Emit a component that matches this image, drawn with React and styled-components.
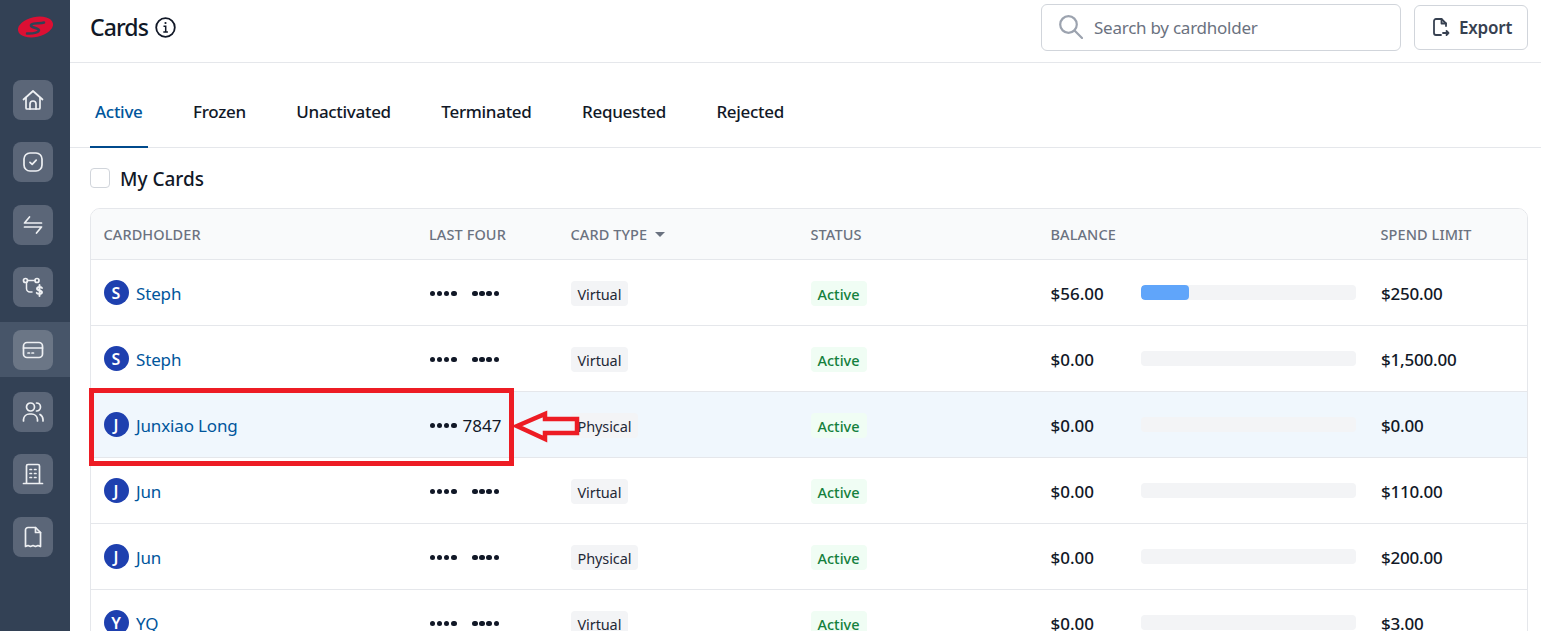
import React from "react";
import styled, { createGlobalStyle } from "styled-components";

const Global = createGlobalStyle`
  html, body { margin: 0; padding: 0; height: 100%; overflow: hidden; background: #fff; }
  body { font-family: "Noto Sans", "Open Sans", sans-serif; color: #111827; }
  * { box-sizing: border-box; }
`;

const Page = styled.div`
  display: flex;
  width: 1541px;
  height: 631px;
  overflow: hidden;
  position: relative;
`;
const Sidebar = styled.nav`
  width: 70px;
  flex: none;
  background: #334155;
  display: flex;
  flex-direction: column;
`;
const LogoSlot = styled.div`
  height: 80px;
  display: flex;
  padding: 16px 0 0 18px;
`;
const NavList = styled.div`
  display: flex;
  flex-direction: column;
`;
const NavItem = styled.div`
  height: 55px;
  margin-bottom: ${(p) => (p.$active ? "15.4px" : "7.4px")};
  display: flex;
  align-items: flex-start;
  padding: ${(p) => (p.$active ? "8px" : "0")} 0 0 13px;
  margin-top: ${(p) => (p.$active ? "-8px" : "0")};
  background: ${(p) => (p.$active ? "#475569" : "transparent")};
`;
const NavButton = styled.div`
  width: 40px;
  height: 40px;
  border-radius: 8px;
  background: ${(p) => (p.$active ? "#6b7686" : "#5b6678")};
  color: #eef0f3;
  display: flex;
  align-items: center;
  justify-content: center;
`;
const Main = styled.main`
  flex: 1;
  min-width: 0;
  display: flex;
  flex-direction: column;
`;
const TopBar = styled.header`
  height: 63px;
  flex: none;
  border-bottom: 1px solid #e5e7eb;
  display: flex;
  align-items: center;
  padding: 0 13px 8px 20px;
`;
const Title = styled.h1`
  margin: 0;
  font-size: 23px;
  font-weight: 500;
  letter-spacing: -0.9px;
  color: #111827;
  display: flex;
  align-items: center;
  gap: 7px;
  flex: 1;
`;
const SearchBox = styled.div`
  width: 360px;
  height: 47px;
  border: 1px solid #d1d5db;
  border-radius: 6px;
  display: flex;
  align-items: center;
  gap: 11px;
  padding: 0 17px;
  color: #6b7280;
  font-size: 17px;
  letter-spacing: -0.25px;
  margin-right: 13px;
`;
const ExportButton = styled.button`
  width: 114px;
  height: 45px;
  border: 1px solid #d1d5db;
  border-radius: 6px;
  background: #fff;
  font: inherit;
  font-size: 17px;
  font-weight: 600;
  letter-spacing: -0.2px;
  color: #374151;
  display: flex;
  align-items: center;
  gap: 9px;
  padding: 0 0 0 17px;
`;
const Tabs = styled.div`
  height: 85px;
  flex: none;
  border-bottom: 1px solid #e5e7eb;
  padding-left: 20px;
  display: flex;
`;
const Tab = styled.div`
  padding: 13px 5px 0;
  margin-right: 40.5px;
  display: flex;
  align-items: center;
  height: 85px;
  font-size: 17px;
  font-weight: 500;
  letter-spacing: -0.3px;
  color: ${(p) => (p.$active ? "#00569c" : "#111827")};
  border-bottom: 2px solid ${(p) => (p.$active ? "#004a8c" : "transparent")};
`;
const Filter = styled.label`
  height: 60px;
  flex: none;
  padding-left: 20px;
  display: flex;
  align-items: center;
  gap: 10px;
  font-size: 19px;
  font-weight: 500;
  color: #111827;
`;
const FilterText = styled.span`
  padding-top: 2px;
`;
const Check = styled.span`
  width: 20px;
  height: 20px;
  border: 1px solid #d1d5db;
  border-radius: 4px;
  background: #fff;
`;
const Table = styled.div`
  margin-left: 20px;
  width: 1438px;
  border: 1px solid #e5e7eb;
  border-radius: 10px 10px 0 0;
  overflow: hidden;
  flex: none;
`;
const Row = styled.div`
  display: grid;
  grid-template-columns: 325.5px 141.5px 240px 240px 330px 1fr;
  padding-left: 12.5px;
  padding-top: ${(p) => (p.$head ? "0" : "2px")};
  align-items: center;
  height: ${(p) => (p.$head ? "51px" : "66px")};
  border-bottom: 1px solid #e5e7eb;
  background: ${(p) => (p.$head ? "#f9fafb" : p.$hi ? "#f0f7fd" : "#fff")};
`;
const HeadCell = styled.div`
  font-size: 14.5px;
  font-weight: 500;
  letter-spacing: 0.1px;
  color: #6b7280;
  text-transform: uppercase;
  display: flex;
  align-items: center;
  gap: 8px;
`;
const Caret = styled.span`
  width: 0;
  height: 0;
  border-left: 5px solid transparent;
  border-right: 5px solid transparent;
  border-top: 5px solid #6b7280;
`;
const Holder = styled.div`
  display: flex;
  align-items: center;
  gap: 7.5px;
  font-size: 17px;
  letter-spacing: -0.15px;
  color: #00569c;
`;
const Avatar = styled.span`
  width: 25px;
  height: 25px;
  border-radius: 50%;
  background: #1e40af;
  color: #fff;
  font-size: 16px;
  font-weight: 600;
  letter-spacing: 0;
  display: flex;
  align-items: center;
  justify-content: center;
  margin-top: -2px;
`;
const Last = styled.div`
  font-size: 17px;
  color: #111827;
  display: flex;
  align-items: center;
  padding-left: 0.5px;
  gap: ${(p) => p.$gap}px;
`;
const Dots = styled.span`
  display: flex;
  gap: 1.7px;
`;
const Dot = styled.i`
  width: 5.5px;
  height: 5.5px;
  border-radius: 50%;
  background: #111827;
`;
const TypeTag = styled.span`
  justify-self: start;
  height: 25px;
  padding: 0 7px;
  border-radius: 4px;
  background: #f3f4f6;
  font-size: 14.5px;
  letter-spacing: -0.1px;
  color: #1f2937;
  display: flex;
  align-items: center;
`;
const StatusTag = styled.span`
  justify-self: start;
  height: 25px;
  padding: 0 7px;
  border-radius: 4px;
  background: #f0fdf4;
  font-size: 14.5px;
  font-weight: 500;
  color: #15803d;
  display: flex;
  align-items: center;
`;
const Balance = styled.div`
  display: grid;
  grid-template-columns: 90px 215px;
  align-items: center;
  font-size: 17px;
  font-weight: 500;
`;
const Track = styled.div`
  height: 15px;
  margin-top: -2px;
  border-radius: 4px;
  background: #f3f4f6;
  overflow: hidden;
`;
const Fill = styled.div`
  height: 100%;
  border-radius: 4px;
  background: #60a5fa;
`;
const Limit = styled.div`
  font-size: 17px;
  font-weight: 500;
  letter-spacing: -0.2px;
  padding-left: 0.5px;
`;
const RedBox = styled.div`
  position: absolute;
  left: 89px;
  top: 388px;
  width: 425px;
  height: 78px;
  border: 5px solid #ed1c24;
`;
const Arrow = styled.svg`
  position: absolute;
  left: 510px;
  top: 405px;
`;

const S = { fill: "none", stroke: "currentColor", strokeWidth: 1.7, strokeLinecap: "round", strokeLinejoin: "round" };
const Ico = ({ children, size = 24 }) => (
  <svg width={size} height={size} viewBox="0 0 24 24" {...S}>{children}</svg>
);

const navIcons = [
  <Ico><path d="M2.500 11.500 12 3l9.500 8.500" /><path d="M5 9.500V20a1 1 0 0 0 1 1h12a1 1 0 0 0 1-1V9.500" /><path d="M9 21v-5a3 3 0 0 1 6 0v5" /></Ico>,
  <Ico><rect x="3" y="3" width="18" height="18" rx="6" /><path d="m9 12.300 2.200 2 4-4.200" /></Ico>,
  <Ico><path d="M8.500 4 3.500 10h17" /><path d="M15.500 20l5-6h-17" /></Ico>,
  <Ico><circle cx="4.500" cy="5.500" r="2" /><circle cx="16" cy="5.500" r="2" /><path d="M6.500 5.500H14M5.500 7.500v6a3.500 3.500 0 0 0 3.500 3.500h2" strokeWidth="1.500" /><path d="M21 13c-.4-1.300-4.800-1.600-5 .6-.2 2.400 5.200 1.400 5 3.800-.2 2-4.700 1.800-5.300.4M18.500 10v11" strokeWidth="1.900" /></Ico>,
  <Ico><rect x="2.500" y="4.500" width="19" height="15" rx="3.500" /><path d="M2.500 10h19M7 15h1.500M11 15h1.500" /></Ico>,
  <Ico><circle cx="9.500" cy="7" r="4" /><path d="M2.500 21v-1.500a6 6 0 0 1 6-5.500h2a6 6 0 0 1 6 5.500V21" /><path d="M15.500 3a4 4 0 0 1 0 8M19 14.500a6 6 0 0 1 3 5V21" /></Ico>,
  <Ico><path d="M2.500 21.500h19M5.500 21.500V4a1.500 1.500 0 0 1 1.500-1.500h10A1.500 1.500 0 0 1 18.500 4v17.500" /><path d="M9 7.500h1.500M13.500 7.500H15M9 11.500h1.500M13.500 11.500H15M9 15.500h1.500M13.500 15.500H15" /></Ico>,
  <Ico><path d="M14.500 2.500H7A2.500 2.500 0 0 0 4.500 5v16.500l2.500-1 2.500 1 2.500-1 2.500 1 2.500-1 2.500 1V7.500z" /><path d="M14.500 2.500v5h5" /></Ico>,
];

const rows = [
  { n: "Steph", t: "Virtual", b: "$56.00", l: "$250.00", w: 22.4 },
  { n: "Steph", t: "Virtual", b: "$0.00", l: "$1,500.00", w: 0 },
  { n: "Junxiao Long", last: "7847", t: "Physical", b: "$0.00", l: "$0.00", w: 0, hi: true },
  { n: "Jun", t: "Virtual", b: "$0.00", l: "$110.00", w: 0 },
  { n: "Jun", t: "Physical", b: "$0.00", l: "$200.00", w: 0 },
  { n: "YQ", t: "Virtual", b: "$0.00", l: "$3.00", w: 0 },
];

const FourDots = () => (
  <Dots><Dot /><Dot /><Dot /><Dot /></Dots>
);

export default function App() {
  return (
    <Page>
      <Global />
      <Sidebar>
        <LogoSlot>
          <svg width="35" height="22" viewBox="0 0 35 22">
            <ellipse cx="17.500" cy="11" rx="17.800" ry="10" transform="rotate(-12 17.500 11)" fill="#dc0f33" />
            <path d="M26 6.500C22 8 16 6 13.500 8.500 11 11 18 11.500 20.500 13.500 23 16 15 18 9 17.500" fill="none" stroke="#334155" strokeWidth="2.500" strokeLinecap="round" />
          </svg>
        </LogoSlot>
        <NavList>
          {navIcons.map((ic, i) => (
            <NavItem key={i} $active={i === 4}>
              <NavButton $active={i === 4}>{ic}</NavButton>
            </NavItem>
          ))}
        </NavList>
      </Sidebar>
      <Main>
        <TopBar>
          <Title>
            Cards
            <svg width="21" height="21" viewBox="0 0 21 21" fill="none" stroke="#111827" strokeWidth="1.800">
              <circle cx="10.500" cy="10.500" r="9.300" />
              <path d="M8.500 9.300h2.200v5.500M8.300 15h4.600" strokeWidth="1.500" />
              <circle cx="10.500" cy="6" r="1.100" fill="#111827" stroke="none" />
            </svg>
          </Title>
          <SearchBox>
            <svg width="24" height="24" viewBox="0 0 24 24" fill="none" stroke="#9ca3af" strokeWidth="2.200" strokeLinecap="round">
              <circle cx="9.500" cy="9.500" r="8.300" />
              <path d="m15.500 15.500 7.500 7.500" />
            </svg>
            Search by cardholder
          </SearchBox>
          <ExportButton>
            <svg width="18" height="20" viewBox="0 0 18 20" fill="none" stroke="#374151" strokeWidth="1.800" strokeLinecap="round" strokeLinejoin="round">
              <path d="M14 9V6.500L9.500 2H4a2 2 0 0 0-2 2v12a2 2 0 0 0 2 2h5" />
              <path d="M9.500 2v4.500H14M11 16h5.500M14.500 14l2 2-2 2" />
            </svg>
            Export
          </ExportButton>
        </TopBar>
        <Tabs>
          <Tab $active>Active</Tab>
          <Tab>Frozen</Tab>
          <Tab>Unactivated</Tab>
          <Tab>Terminated</Tab>
          <Tab>Requested</Tab>
          <Tab>Rejected</Tab>
        </Tabs>
        <Filter><Check /><FilterText>My Cards</FilterText></Filter>
        <Table>
          <Row $head>
            <HeadCell>Cardholder</HeadCell>
            <HeadCell>Last Four</HeadCell>
            <HeadCell>Card Type<Caret /></HeadCell>
            <HeadCell>Status</HeadCell>
            <HeadCell>Balance</HeadCell>
            <HeadCell>Spend Limit</HeadCell>
          </Row>
          {rows.map((r, i) => (
            <Row key={i} $hi={r.hi}>
              <Holder><Avatar>{r.n[0]}</Avatar>{r.n}</Holder>
              {r.last ? (
                <Last $gap={6}><FourDots />{r.last}</Last>
              ) : (
                <Last $gap={15.5}><FourDots /><FourDots /></Last>
              )}
              <TypeTag>{r.t}</TypeTag>
              <StatusTag>Active</StatusTag>
              <Balance>
                {r.b}
                <Track><Fill style={{ width: `${r.w}%` }} /></Track>
              </Balance>
              <Limit>{r.l}</Limit>
            </Row>
          ))}
        </Table>
      </Main>
      <RedBox />
      <Arrow width="72" height="42" viewBox="0 0 72 42" fill="none">
        <path d="M7 21 35 9v5h32v14H35v6Z" stroke="#ed1c24" strokeWidth="4.500" strokeLinejoin="miter" />
      </Arrow>
    </Page>
  );
}
